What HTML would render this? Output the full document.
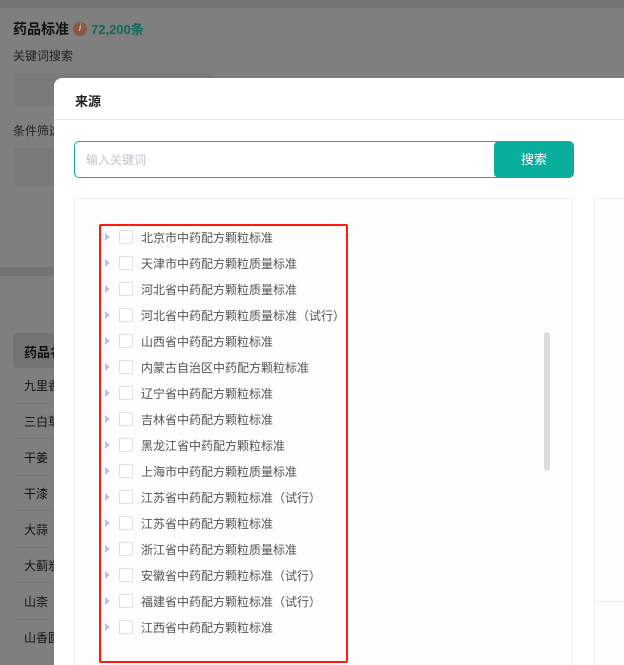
<!DOCTYPE html>
<html style="width:624px;height:665px;overflow:hidden"><head><meta charset="utf-8"><style>
*{margin:0;padding:0;box-sizing:border-box}
body{width:624px;height:665px;overflow:hidden;position:relative;background:#7f7f7f;font-family:"Liberation Sans","Noto Sans CJK SC",sans-serif;}
.a{position:absolute}
.r{height:26px;display:flex;align-items:center}.t{width:0;height:0;border-left:5px solid #c0c4cc;border-top:4px solid transparent;border-bottom:4px solid transparent;margin-left:1px;margin-right:9px}.c{width:14px;height:14px;border:1px solid #dcdfe6;border-radius:2px;background:#fff;margin-right:8px}
</style></head><body>
<div class="a" style="left:0;top:0;width:624px;height:8px;background:#747474"></div>
<div class="a" style="left:13px;top:19px;font-size:14px;font-weight:bold;color:#111">药品标准</div>
<div class="a" style="left:73px;top:22px;width:14px;height:14px;border-radius:50%;background:#8a5a3e;color:#ddd;font-size:10px;font-style:italic;text-align:center;line-height:14px">i</div>
<div class="a" style="left:91px;top:19px;font-size:13px;font-weight:bold;color:#0b6a5e">72,200条</div>
<div class="a" style="left:13px;top:47px;font-size:12px;color:#222">关键词搜索</div>
<div class="a" style="left:13px;top:73px;width:200px;height:33px;background:#7a7a7a;border-radius:3px"></div>
<div class="a" style="left:13px;top:122px;font-size:12px;color:#222">条件筛选</div>
<div class="a" style="left:13px;top:148px;width:200px;height:38px;background:#7a7a7a;border-radius:3px"></div>
<div class="a" style="left:0;top:267px;width:624px;height:9px;background:#747474"></div>
<div class="a" style="left:13px;top:333px;width:60px;height:35px;background:#737575;border-radius:4px"></div>
<div class="a" style="left:24px;top:342px;font-size:13px;font-weight:bold;color:#111">药品名</div>
<div class="a" style="left:24px;top:368px;font-size:12px;color:#111;line-height:36px">九里香<br>三白草<br>干姜<br>干漆<br>大蒜<br>大蓟炭<br>山柰<br>山香圆</div>
<div class="a" style="left:13px;top:403px;width:60px;border-top:1px solid #777;height:36px;border-bottom:1px solid #777"></div>
<div class="a" style="left:13px;top:475px;width:60px;border-top:1px solid #777;height:36px;border-bottom:1px solid #777"></div>
<div class="a" style="left:13px;top:547px;width:60px;border-top:1px solid #777;height:36px;border-bottom:1px solid #777"></div>
<div class="a" style="left:13px;top:619px;width:60px;border-top:1px solid #777;height:36px"></div>

<div class="a" style="left:54px;top:78px;width:570px;height:587px;background:#fff;border-radius:8px 0 0 0"></div>
<div class="a" style="left:75px;top:91px;font-size:13px;font-weight:bold;color:#222">来源</div>
<div class="a" style="left:54px;top:119px;width:570px;height:1px;background:#e8e8e8"></div>
<div class="a" style="left:74px;top:141px;width:425px;height:37px;border:1px solid #11ae9c;border-radius:5px 0 0 5px"></div>
<div class="a" style="left:86px;top:151px;font-size:12px;color:#c0c4cc">输入关键词</div>
<div class="a" style="left:494px;top:141px;width:80px;height:37px;background:#0aae9c;border-radius:5px;color:#fff;font-size:13px;text-align:center;line-height:37px">搜索</div>
<div class="a" style="left:74px;top:198px;width:499px;height:470px;border:1px solid #eee;background:#fdfdfd"></div>
<div class="a" style="left:594px;top:198px;width:40px;height:470px;border:1px solid #eee;background:#fdfdfd"></div>
<div class="a" style="left:594px;top:601px;width:30px;height:1px;background:#eee"></div>
<div class="a" style="left:544px;top:332px;width:6px;height:139px;background:#dcdcdd;border-radius:3px"></div>
<div class="a" style="left:99px;top:224px;width:249px;height:439px;border:2px solid #ff1a10;border-radius:2px"></div>
<div class="a" style="left:104px;top:224px;font-size:12px;color:#555">
<div class="r"><i class="t"></i><i class="c"></i>北京市中药配方颗粒标准</div>
<div class="r"><i class="t"></i><i class="c"></i>天津市中药配方颗粒质量标准</div>
<div class="r"><i class="t"></i><i class="c"></i>河北省中药配方颗粒质量标准</div>
<div class="r"><i class="t"></i><i class="c"></i>河北省中药配方颗粒质量标准（试行）</div>
<div class="r"><i class="t"></i><i class="c"></i>山西省中药配方颗粒标准</div>
<div class="r"><i class="t"></i><i class="c"></i>内蒙古自治区中药配方颗粒标准</div>
<div class="r"><i class="t"></i><i class="c"></i>辽宁省中药配方颗粒标准</div>
<div class="r"><i class="t"></i><i class="c"></i>吉林省中药配方颗粒标准</div>
<div class="r"><i class="t"></i><i class="c"></i>黑龙江省中药配方颗粒标准</div>
<div class="r"><i class="t"></i><i class="c"></i>上海市中药配方颗粒质量标准</div>
<div class="r"><i class="t"></i><i class="c"></i>江苏省中药配方颗粒标准（试行）</div>
<div class="r"><i class="t"></i><i class="c"></i>江苏省中药配方颗粒标准</div>
<div class="r"><i class="t"></i><i class="c"></i>浙江省中药配方颗粒质量标准</div>
<div class="r"><i class="t"></i><i class="c"></i>安徽省中药配方颗粒标准（试行）</div>
<div class="r"><i class="t"></i><i class="c"></i>福建省中药配方颗粒标准（试行）</div>
<div class="r"><i class="t"></i><i class="c"></i>江西省中药配方颗粒标准</div>
</div>
</body></html>
